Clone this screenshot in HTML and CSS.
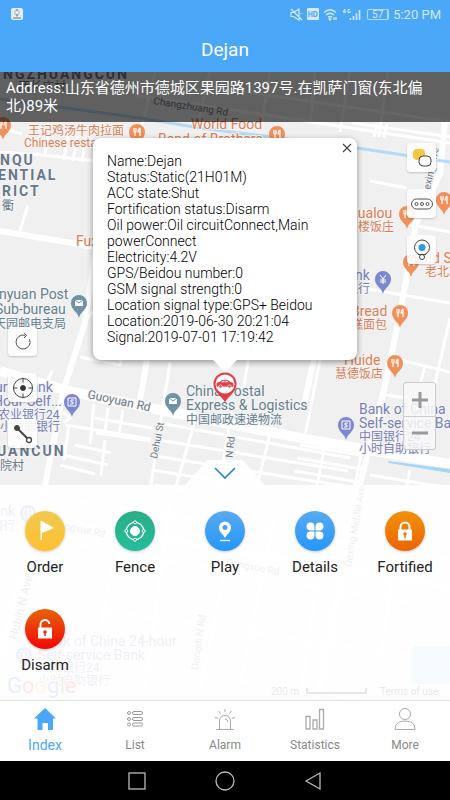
FILE: index.html
```
<!DOCTYPE html>
<html lang="en">
<head>
<meta charset="utf-8">
<meta name="viewport" content="width=device-width, initial-scale=1">
<title>Dejan</title>
<link rel="stylesheet" href="styles.css">
</head>
<body>
<header class="top">
  <div class="status">
    <svg class="status-app" width="12" height="12" viewBox="0 0 12 12" aria-hidden="true"><rect width="12" height="12" rx="2" fill="#e4effb"/><circle cx="6" cy="4.500" r="2.200" fill="none" stroke="#9aaede"/><path d="M4.500 6.500L6 9l1.500-2.500" fill="#8b8fc4"/><path d="M2 10h8" stroke="#666f9c"/><circle cx="6" cy="1.800" r=".8" fill="#c55f80"/></svg>
    <div class="status-right">
      <svg width="13" height="13" viewBox="0 0 13 13" fill="none" stroke="#d5e9fd" stroke-width="1.200" aria-hidden="true"><path d="M1 4.500h2.500L9 1v11L3.500 8.500H1zM1 1l11 11M11 5v1"/></svg>
      <svg width="12" height="12" viewBox="0 0 12 12" aria-hidden="true"><rect width="12" height="12" rx="1" fill="#d5e9fd"/><path d="M2 3v6M5 3v6M2 6h3M7 3.500v5h1.200q2-.2 2-2.500t-2-2.500z" fill="none" stroke="#4ba7f8" stroke-width="1.200"/></svg>
      <svg width="15" height="13" viewBox="0 0 15 13" fill="none" stroke="#d5e9fd" stroke-width="1.300" aria-hidden="true"><path d="M1 4.500Q7 -1 13 4.500M3 7q4-3.500 8 0M5 9.300q2-1.600 4 0"/><circle cx="7" cy="11.200" r=".8" fill="#d5e9fd"/><path d="M11 12V9M13 9v3"/></svg>
      <svg width="19" height="13" viewBox="0 0 19 13" stroke="#d5e9fd" fill="none" aria-hidden="true"><path d="M3 1L1 4h3M3 1v4M8 1.500H6v3h2V3"/><path d="M8.500 12v-2M11.500 12V8M14.500 12V5.500M17.500 12V2" stroke-width="1.600"/></svg>
      <span class="battery">57</span>
      <span class="clock">5:20 PM</span>
    </div>
  </div>
  <h1 class="title">Dejan</h1>
</header>

<main class="map">
  <svg class="map-art" viewBox="0 72 450 628" preserveAspectRatio="xMidYMin slice" aria-hidden="true">
    <defs>
      <g id="pin"><path d="M0 15C-1 9-8 7-8 0a8 8 0 0 1 16 0C8 7 1 9 0 15z"/></g>
      <g id="food"><use href="#pin" fill="#f0905c"/><path d="M-3-4v3q0 1 1 1v4M-1-4v3q0 1-1 1M3-4v8M3-4q-2 1-2 4h2" fill="none" stroke="#fff" stroke-width="1.200"/></g>
      <g id="mail"><use href="#pin" fill="#6f93a4"/><path d="M-4-3h8v6h-8z" fill="#fff"/><path d="M-4-3l4 3 4-3" fill="none" stroke="#6f93a4"/></g>
      <g id="bank"><use href="#pin" fill="#7d87cc"/><path d="M-4-4h8v8h-8zM2-2h-3v2h2v2h-3" fill="none" stroke="#fff"/></g>
    </defs>
    <rect y="72" width="450" height="628" fill="#f1f0f0"/>
    <g class="road thin">
      <path d="M0 128l22 6M42 155l90 10M45 155l3-20M64 160l4-25M73 161l4-25M82 162l4-25M20 231l8-26M155 72l-22 90M0 152l42 3"/>
      <path d="M210 72l-12 50M270 72l-8 50M315 72l-5 50M135 95l315 48M200 85l250 37M350 72l-10 60M388 72l-9 65M352 123l100 14M377 123l-3 14M387 124l-3 14"/>
      <path d="M370 181l37 7M407 224l43 8M357 287l93 16M450 318l-16 70M400 360l50 12M385 395l30 4M425 366l-5 18"/>
      <path d="M80 357l40 8 3-12M84 321l65-65M44 388l8-17M64 423l6-5-7-6"/>
      <path d="M95 418l62 11M96 433l55 8M94 404l-4 40M108 408l-3 23M123 410l-4 24M65 425l86 14M75 445l36 8M63 455l45 10M60 465l35 9M69 425l-5 35M105 440l-4 36"/>
      <path d="M170 362l-20 128M195 420l-20 70M232 410l-14 80M248 360l-5 35M322 350l-17 86M270 434l-14 56M325 445l-9 45M362 450l-9 45"/>
      <path d="M160 423l190 35M158 440l190 31M155 456l190 30M152 470l130 21M300 445l60 10M297 458l65 11M294 471l65 11M154 485l30 5M370 475l80 13M410 470l-4 20"/>
      <path d="M70 500l380 60M50 540l390 68M100 610l340 50M170 500l-25 190M240 500l-40 190M275 515l-35 170M320 560l-20 140M400 510l-20 160M120 520l-30 170M0 640l450 75"/>
    </g>
    <g class="road mid">
      <path d="M0 231l95 16M445 122l-5 52-24 50-16 90-16 76-28 110-45 235M140 400l7-40M303 410l14-65"/>
      <path d="M98 235l-13 88-21 65-20 102-44 170M0 512l450 75"/>
    </g>
    <path class="road wide" d="M0 371l68 20 92 19 140 28 150 26"/>
    <path class="river" d="M0 99l140 19 60 10 157 20 93 14"/>
    <path d="M388 461l62 8v4l-61-10z" fill="#a9d5f5"/>
    <rect x="411" y="646" width="60" height="38" rx="5" fill="#b4dcf7"/>

    <g class="area">
      <text x="3" y="79">NGZHUANGCUN</text>
      <text class="cn" x="18" y="91">西长庄村</text>
      <text x="0" y="165">NQU</text>
      <text x="-2" y="180">ENTIAL</text>
      <text x="2" y="196">RICT</text>
      <text class="cn" x="2" y="210">衢</text>
      <text x="-3" y="456">UANCUN</text>
      <text class="cn" x="0" y="470">院村</text>
    </g>
    <g class="food">
      <text class="cn" x="28" y="135">王记鸡汤牛肉拉面</text><text class="small" x="24" y="147">Chinese restaurant</text>
      <text x="191" y="129">World Food</text><text x="158" y="144">Band of Brothers</text>
      <text x="76" y="246">Fuxing</text>
      <text x="350" y="218">gualou</text><text class="cn" x="346" y="231">子楼饭庄</text>
      <text x="419" y="263">Old Sun</text><text class="cn" x="425" y="276">老北京</text>
      <text x="351" y="316">Bread</text><text class="cn" x="339" y="329">香糕面包</text>
      <text x="344" y="365">Huide</text><text class="cn" x="335" y="378">慧德饭店</text>
    </g>
    <g class="post">
      <text x="-1" y="299">nyuan Post</text><text x="-5" y="314">Sub-bureau</text><text class="cn" x="-6" y="328">天园邮电支局</text>
      <text x="186" y="396">China Postal</text><text x="186" y="410">Express &amp; Logistics</text><text class="cn" x="186" y="424">中国邮政速递物流</text>
    </g>
    <g class="bank">
      <text x="-5" y="392">ural Bank</text><text x="-7" y="406">Hour Self...</text><text class="cn" x="-2" y="419">农业银行24</text><text class="cn" x="0" y="431">小时助银行</text>
      <text x="355" y="280">nk</text><text class="cn" x="346" y="293">银行</text>
      <text x="359" y="414">Bank of China</text><text x="359" y="428">Self-service Bank</text><text class="cn" x="359" y="441">中国银行24</text><text class="cn" x="359" y="453">小时自助银行</text>
      <text x="-16" y="516">Bank</text><text class="cn" x="-9" y="530">银行</text>
      <text x="39" y="646">Bank of China 24-hour</text><text x="38" y="660">Self-service Bank</text><text class="cn" x="38" y="672">中国银行24</text><text class="cn" x="38" y="685">小时自助银行</text>
    </g>
    <g class="street">
      <text transform="translate(153 104) rotate(9)">Changzhuang Rd</text>
      <text class="small" transform="translate(87 398) rotate(12)">Guoyuan Rd</text>
      <text transform="translate(157 459) rotate(-79)">Dehui St</text>
      <text transform="translate(232 463) rotate(-84)">i N Rd</text>
      <text transform="translate(430 190) rotate(-78)">exing Ave</text>
      <text class="small" transform="translate(17 640) rotate(-76)">Hubin N Ave</text>
      <text transform="translate(52 527) rotate(11)">Dongxue Rd</text>
      <text transform="translate(226 565) rotate(11)">Dongxue Rd</text>
      <text transform="translate(351 567) rotate(-80)">Dexing Middle Ave</text>
      <text transform="translate(198 670) rotate(-82)">Dongdi N Rd</text>
    </g>
    <use href="#food" x="3" y="125"/><use href="#food" x="137" y="132"/><use href="#food" x="277" y="134"/>
    <use href="#food" x="407" y="214"/><use href="#food" x="444" y="200"/><use href="#food" x="411" y="262"/><use href="#food" x="400" y="313"/><use href="#food" x="395" y="363"/>
    <use href="#mail" x="79" y="303"/><use href="#mail" x="173" y="401"/>
    <use href="#pin" x="383" y="279" fill="#7d87cc"/><path d="M380 275l3 4 3-4M383 279v5M380 280h6M380 282h6" fill="none" stroke="#fff"/>
    <use href="#bank" x="72" y="402"/><use href="#bank" x="346" y="425"/><use href="#bank" x="28" y="513"/><use href="#bank" x="24" y="655"/>
    <text class="google" x="7" y="693"><tspan fill="#4285f4">G</tspan><tspan fill="#ea4335">o</tspan><tspan fill="#fbbc05">o</tspan><tspan fill="#4285f4">g</tspan><tspan fill="#34a853">l</tspan><tspan fill="#ea4335">e</tspan></text>
    <g class="legal"><text x="271" y="695">200 m</text><text x="380" y="695">Terms of use</text><path d="M307 688v5h59v-5" fill="none" stroke="#444" stroke-width="2"/></g>
  </svg>

  <p class="address">Address:山东省德州市德城区果园路1397号.在凯萨门窗(东北偏北)89米</p>

  <div class="stage">
    <div class="tools tools-left">
      <button class="tool" aria-label="Refresh"><svg width="20" height="20" viewBox="0 0 20 20" fill="none" stroke="#555"><path d="M12 3.300a7 7 0 1 0 4.500 4"/><path d="M11 .8l2.500 2.700-2.500 2.500"/></svg></button>
      <button class="tool" aria-label="Locate"><svg width="22" height="22" viewBox="0 0 22 22" fill="none" stroke="#444"><circle cx="11" cy="11" r="9.500"/><path d="M11 1.500v4M11 16.500v4M1.500 11h4M16.500 11h4"/><circle cx="11" cy="11" r="2.500" fill="#333"/></svg></button>
      <button class="tool" aria-label="Measure"><svg width="20" height="20" viewBox="0 0 20 20" fill="none" stroke="#444"><path d="M4 4l11 11" stroke-width="2"/><circle cx="4" cy="4" r="2.500" fill="#444"/><circle cx="16" cy="16" r="2.500" fill="#fff" stroke-width="1.300"/></svg></button>
    </div>
    <div class="center">
      <section class="popup" aria-label="Device status">
        <button class="close" aria-label="Close"><svg width="10" height="10" viewBox="0 0 10 10" stroke="#444" stroke-width="1.200"><path d="M1 1l8 8M9 1L1 9"/></svg></button>
        <ul class="facts">
          <li>Name:Dejan</li>
          <li>Status:Static(21H01M)</li>
          <li>ACC state:Shut</li>
          <li>Fortification status:Disarm</li>
          <li>Oil power:Oil circuitConnect,Main powerConnect</li>
          <li>Electricity:4.2V</li>
          <li>GPS/Beidou number:0</li>
          <li>GSM signal strength:0</li>
          <li>Location signal type:GPS+ Beidou</li>
          <li>Location:2019-06-30 20:21:04</li>
          <li>Signal:2019-07-01 17:19:42</li>
        </ul>
      </section>
      <svg class="car-pin" width="24" height="31" viewBox="0 0 24 31" aria-hidden="true"><path d="M12 30.500C10 25 .5 21 .5 12a11.500 11.500 0 0 1 23 0C23.500 21 14 25 12 30.500z" fill="#df3f48"/><circle cx="12" cy="12" r="9.500" fill="#fff"/><path d="M3.500 14.500v-3q1-1.500 3.500-1.700Q9 7.500 12 7.500q3.500 0 5.500 2.500 2.500.3 3 1.700v3z" fill="#df3f48"/><path d="M8 10.200q1.500-1.700 3.500-1.700v1.700zM12.500 8.500q2 .2 3.200 1.700h-3.200z" fill="#fff"/><circle cx="7.500" cy="14.500" r="1.600" fill="#df3f48" stroke="#fff" stroke-width=".7"/><circle cx="16.500" cy="14.500" r="1.600" fill="#df3f48" stroke="#fff" stroke-width=".7"/></svg>
    </div>
    <div class="tools tools-right">
      <button class="tool" aria-label="Map layer"><svg width="20" height="20" viewBox="0 0 20 20"><rect x="1" y="1" width="12" height="11" rx="4" fill="#f7c744"/><rect x="7" y="8" width="12" height="10" rx="4" fill="#fff" stroke="#444"/></svg></button>
      <button class="tool" aria-label="Password"><svg width="22" height="12" viewBox="0 0 22 12" fill="none" stroke="#555"><rect x=".5" y="1" width="21" height="10" rx="5"/><circle cx="5.500" cy="6" r="1.500"/><circle cx="11" cy="6" r="1.500"/><circle cx="16.500" cy="6" r="1.500"/></svg></button>
      <button class="tool" aria-label="Street view"><svg width="18" height="22" viewBox="0 0 18 22"><circle cx="9" cy="8.500" r="7.500" fill="#fff" stroke="#444"/><circle cx="9" cy="8.500" r="3.500" fill="#2d9bea"/><circle cx="9" cy="18" r="2.500" fill="#fff" stroke="#444"/><path d="M5 15.500h8" stroke="#444"/></svg></button>
      <div class="zoom">
        <button class="zoom-btn" aria-label="Zoom in"><svg width="16" height="16" viewBox="0 0 16 16" stroke="#999" stroke-width="3"><path d="M8 0v16M0 8h16"/></svg></button>
        <button class="zoom-btn" aria-label="Zoom out"><svg width="16" height="16" viewBox="0 0 16 16" stroke="#999" stroke-width="3"><path d="M0 8h16"/></svg></button>
      </div>
    </div>
  </div>

  <section class="drawer">
    <button class="handle" aria-label="Collapse panel"><svg width="22" height="12" viewBox="0 0 22 12" fill="none" stroke="#1e82cc" stroke-width="1.600"><path d="M1 1l10 10L21 1"/></svg></button>
    <div class="actions">
      <button class="action"><span class="disc yellow"><svg width="40" height="40" viewBox="0 0 40 40" fill="#fff"><path d="M15.500 10h1.500l12 7-12 5v7h-1.500z"/></svg></span>Order</button>
      <button class="action"><span class="disc green"><svg width="40" height="40" viewBox="0 0 40 40" fill="none" stroke="#fff"><circle cx="20" cy="20" r="8.700" stroke-width="1.300"/><circle cx="20" cy="20" r="4.500" fill="#fff"/><g fill="#29b48f"><circle cx="20" cy="11.300" r="1.500"/><circle cx="20" cy="28.700" r="1.500"/><circle cx="11.300" cy="20" r="1.500"/><circle cx="28.700" cy="20" r="1.500"/></g></svg></span>Fence</button>
      <button class="action"><span class="disc blue"><svg width="40" height="40" viewBox="0 0 40 40"><path d="M20 27c-2-4-6-6-6-10.500a6 6 0 0 1 12 0C26 21 22 23 20 27z" fill="#fff"/><circle cx="20" cy="16.500" r="2.500" fill="#43a2f6"/><path d="M15 29.500h10" stroke="#fff" stroke-width="1.300"/></svg></span>Play</button>
      <button class="action"><span class="disc blue"><svg width="40" height="40" viewBox="0 0 40 40" fill="#fff"><path d="M19.500 19.500H15a4 4 0 1 1 4.500-4.500zM20.500 19.500H25a4 4 0 1 0-4.500-4.500zM19.500 20.500H15a4 4 0 1 0 4.500 4.500zM20.500 20.500H25a4 4 0 1 1-4.500 4.500z"/></svg></span>Details</button>
      <button class="action"><span class="disc orange"><svg width="40" height="40" viewBox="0 0 40 40"><path d="M15.500 19v-3a4.500 4.500 0 0 1 9 0v3" fill="none" stroke="#fff" stroke-width="2"/><path d="M13 18.500h14v11H13z" fill="#fff"/><circle cx="20" cy="23" r="1.800" fill="#ee7b0a"/><path d="M20 23v4" stroke="#ee7b0a" stroke-width="1.600"/></svg></span>Fortified</button>
      <button class="action"><span class="disc red"><svg width="40" height="40" viewBox="0 0 40 40"><path d="M15.500 19v-3a4.500 4.500 0 0 1 9-1" fill="none" stroke="#fff" stroke-width="2"/><path d="M13 18.500h14v11H13z" fill="#fff"/><circle cx="20" cy="23" r="1.800" fill="#e5300a"/><path d="M20 23v4" stroke="#e5300a" stroke-width="1.600"/></svg></span>Disarm</button>
    </div>
  </section>
</main>

<nav class="tabs" aria-label="Main">
  <a class="tab active" href="#index"><svg width="24" height="24" viewBox="0 0 24 24" fill="#4ba7f8"><path d="M12 1l11 10.500h-3V22q0 1-1 1h-4v-7H9.500v7H5.500q-1 0-1-1V11.500H1z"/></svg><span>Index</span></a>
  <a class="tab" href="#list"><svg width="24" height="24" viewBox="0 0 24 24" fill="none" stroke="#999"><circle cx="6" cy="6" r="1.500"/><circle cx="6" cy="12" r="1.500"/><circle cx="6" cy="17.500" r="1.500"/><rect x="9.500" y="4.500" width="10" height="3" rx="1.500"/><rect x="9.500" y="10.500" width="10" height="3" rx="1.500"/><rect x="9.500" y="16" width="10" height="3" rx="1.500"/></svg><span>List</span></a>
  <a class="tab" href="#alarm"><svg width="24" height="24" viewBox="0 0 24 24" fill="none" stroke="#aaa"><path d="M3 22.500h18M6.500 22.500V14a5.500 5.500 0 0 1 11 0v8.500M12 12q2.500 0 3 3M12 2v3M5.500 4l2 2.500M18.500 4l-2 2.500M2 10.500l3 .8M22 10.500l-3 .8"/></svg><span>Alarm</span></a>
  <a class="tab" href="#statistics"><svg width="24" height="24" viewBox="0 0 24 24" fill="none" stroke="#aaa" stroke-width="1.300"><path d="M3 9.500h4v12.500H3zM10 13h4v9h-4zM16.500 2.500h4V22h-4z"/></svg><span>Statistics</span></a>
  <a class="tab" href="#more"><svg width="24" height="24" viewBox="0 0 24 24" fill="none" stroke="#aaa"><circle cx="12" cy="7" r="5.500"/><path d="M2 22.500q0-8.500 10-8.500t10 8.500z"/></svg><span>More</span></a>
</nav>

<footer class="system">
  <button aria-label="Recent apps"><svg width="18" height="18" viewBox="0 0 18 18" fill="none" stroke="#bbb" stroke-width="1.300"><rect x="1" y="1" width="16" height="16"/></svg></button>
  <button aria-label="Home"><svg width="20" height="20" viewBox="0 0 20 20" fill="none" stroke="#bbb" stroke-width="1.300"><circle cx="10" cy="10" r="9"/></svg></button>
  <button aria-label="Back"><svg width="18" height="20" viewBox="0 0 18 20" fill="none" stroke="#bbb" stroke-width="1.300"><path d="M16 2v16L2 10z"/></svg></button>
</footer>
</body>
</html>
```

FILE: styles.css
```
* { box-sizing: border-box; }

body {
  margin: 0;
  min-height: 100vh;
  display: flex;
  flex-direction: column;
  font-family: Roboto, "Noto Sans CJK SC", sans-serif;
  color: #222;
  background: #000;
}

button {
  padding: 0;
  border: 0;
  background: none;
  font: inherit;
  color: inherit;
  cursor: pointer;
}

svg { display: block; }

/* Header */
.top { background: #4ba7f8; color: #fff; }

.status {
  height: 28px;
  padding: 0 9px 0 11px;
  display: flex;
  align-items: center;
  justify-content: space-between;
  color: #d5e9fd;
}

.status-right { display: flex; align-items: center; gap: 4px; }

.battery {
  width: 22px;
  height: 11px;
  margin-left: 2px;
  border: 1px solid #b5d9fc;
  border-right-width: 2px;
  border-radius: 2px;
  font-size: 10px;
  line-height: 9px;
  text-align: center;
}

.clock { font-size: 13px; }

.title {
  margin: 0;
  height: 44px;
  font-size: 19px;
  line-height: 44px;
  font-weight: 400;
  text-align: center;
}

/* Map */
.map {
  position: relative;
  flex: 1;
  display: flex;
  flex-direction: column;
  overflow: hidden;
  isolation: isolate;
}

.map-art {
  position: absolute;
  inset: 0;
  width: 100%;
  height: 100%;
  z-index: -1;
}

.map-art text {
  font-size: 14px;
  paint-order: stroke;
  stroke: #f6f5f5;
  stroke-width: 2px;
}

.road { fill: none; stroke: #fff; }
.thin { stroke-width: 3px; }
.mid { stroke-width: 6px; }
.wide { stroke-width: 10px; }
.river { fill: none; stroke: #b4daf5; stroke-width: 3px; }
.area { font-weight: 700; fill: #65788a; letter-spacing: 2px; }
.food { fill: #d97f58; }
.post { fill: #64808f; }
.bank { fill: #7580b5; }
.street { fill: #6d7b87; }
.legal { fill: #444; }
.map-art .cn { font-size: 12px; font-weight: 400; letter-spacing: 0; }
.map-art .small { font-size: 12px; }
.map-art .street text:not(.small),
.map-art .legal text { font-size: 10px; }
.map-art .google { font-size: 22px; }

.address {
  margin: 0;
  padding: 7px 12px 7px 6px;
  font-size: 15px;
  line-height: 18px;
  color: #fff;
  background: rgba(0, 0, 0, .6);
}

.stage {
  flex: 1;
  padding: 16px 14px 10px 8px;
  display: flex;
  justify-content: space-between;
}

.tools { width: 34px; display: flex; flex-direction: column; gap: 17px; }
.tools-left { justify-content: flex-end; padding-bottom: 2px; }
.tools-right { align-items: flex-end; padding-top: 5px; }

.tool {
  width: 29px;
  height: 29px;
  display: grid;
  place-items: center;
  border-radius: 4px;
  background: rgba(253, 253, 253, .92);
  box-shadow: 0 1px 2px rgba(0, 0, 0, .2);
}

.zoom {
  margin-top: auto;
  width: 33px;
  border: 1px solid #ccc;
  border-radius: 3px;
  background: rgba(248, 248, 248, .85);
}

.zoom-btn { width: 100%; height: 33px; display: grid; place-items: center; }
.zoom-btn + .zoom-btn { border-top: 1px solid #ccc; }

.center {
  width: 264px;
  margin-left: 6px;
  display: flex;
  flex-direction: column;
  align-items: center;
  gap: 12px;
}

.popup {
  position: relative;
  width: 100%;
  padding: 15px 14px;
  border-radius: 8px;
  background: #fff;
  box-shadow: 0 2px 6px rgba(0, 0, 0, .4);
}

.popup::after {
  content: "";
  position: absolute;
  top: 100%;
  left: calc(50% - 12px);
  border: 12px solid transparent;
  border-top-color: #fff;
  border-bottom: 0;
}

.close { position: absolute; top: 5px; right: 5px; }

.facts {
  margin: 0;
  padding: 0;
  list-style: none;
  font-size: 14px;
  line-height: 16px;
  font-weight: 300;
  color: #000;
}

/* Drawer */
.handle {
  width: 80px;
  height: 25px;
  margin: 0 auto;
  display: grid;
  place-items: center;
  background: rgba(255, 255, 255, .88);
  clip-path: polygon(28% 0, 72% 0, 100% 100%, 0 100%);
}

.actions {
  display: grid;
  grid-template-columns: repeat(5, 1fr);
  row-gap: 31px;
  padding: 26px 0 24px;
  background: rgba(255, 255, 255, .88);
}

.action {
  display: flex;
  flex-direction: column;
  align-items: center;
  gap: 5px;
  font-size: 15px;
  line-height: 22px;
}

.disc { border-radius: 50%; box-shadow: 0 1px 3px rgba(0, 0, 0, .2); }
.yellow { background: linear-gradient(#f1c950, #fcc02f); }
.green { background: linear-gradient(#2aad84, #25bd9c); }
.blue { background: linear-gradient(#58aaf0, #2596fb); }
.orange { background: linear-gradient(#f19207, #ec6306); }
.red { background: linear-gradient(#e66308, #f50505); }

/* Bottom bars */
.tabs {
  display: grid;
  grid-template-columns: repeat(5, 1fr);
  height: 61px;
  border-top: 1px solid #ddd;
  background: #fff;
}

.tab {
  display: flex;
  flex-direction: column;
  align-items: center;
  gap: 5px;
  padding-top: 6px;
  font-size: 12px;
  line-height: 18px;
  color: #888;
  text-decoration: none;
}

.active { font-size: 14px; color: #4ba7f8; }

.system {
  height: 39px;
  display: flex;
  align-items: center;
  justify-content: center;
  gap: 69px;
}
```
